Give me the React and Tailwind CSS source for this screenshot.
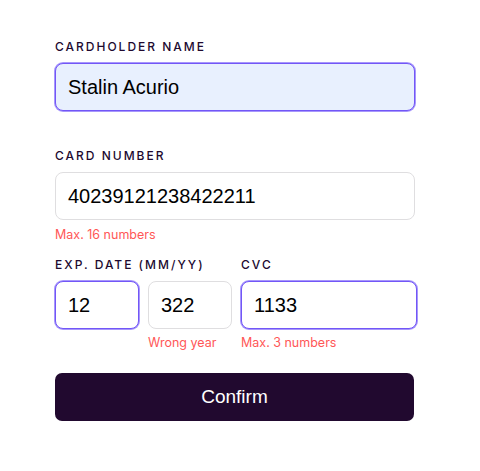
export default function App() {
  const label = "block text-[12px] leading-[16px] tracking-[2px] uppercase text-[#21092f] font-medium";
  const labelFont = { fontFamily: "Inter, 'DejaVu Sans', sans-serif" };
  const inputBase = "h-[48px] rounded-[8px] border px-3 text-[20px] text-black";
  const focused = "border-[#7256f7] ring-1 ring-[#a797fb]";
  const plain = "border-[#dfdee0]";
  const err = "block text-[12.5px] leading-[16px] text-[#ff5757]";
  return (
    <div className="w-[480px] h-[471px] bg-white" style={{ fontFamily: "'Liberation Sans', Arial, sans-serif" }}>
      <div className="ml-[55px] w-[360px] pt-[39px]">
        <span className={label} style={labelFont}>Cardholder name</span>
        <div className={`mt-[8px] flex items-center bg-[#e8f0fe] ${inputBase} ${focused}`}>Stalin Acurio</div>

        <span className={`${label} mt-[37px]`} style={labelFont}>Card number</span>
        <div className={`mt-[8px] flex items-center bg-white ${inputBase} ${plain}`}>40239121238422211</div>
        <span className={`${err} mt-[7px]`} style={labelFont}>Max. 16 numbers</span>

        <div className="mt-[14px] flex w-[362px] gap-[9px]">
          <div className="flex flex-col w-[177px]">
            <span className={label} style={labelFont}>Exp. Date (MM/YY)</span>
            <div className="mt-[8px] flex gap-[9px]">
              <div className="flex flex-col w-[84px]">
                <div className={`flex items-center bg-white ${inputBase} ${focused}`}>12</div>
              </div>
              <div className="flex flex-col w-[84px]">
                <div className={`flex items-center bg-white ${inputBase} ${plain}`}>322</div>
                <span className={`${err} mt-[6px]`} style={labelFont}>Wrong year</span>
              </div>
            </div>
          </div>
          <div className="flex flex-col flex-1">
            <span className={label} style={labelFont}>CVC</span>
            <div className={`mt-[8px] flex items-center bg-white ${inputBase} ${focused}`}>1133</div>
            <span className={`${err} mt-[6px]`} style={labelFont}>Max. 3 numbers</span>
          </div>
        </div>

        <button className="mt-[22px] flex h-[48px] w-[359px] items-center justify-center rounded-[7px] bg-[#21092f] text-[19px] text-white">
          Confirm
        </button>
      </div>
    </div>
  );
}
